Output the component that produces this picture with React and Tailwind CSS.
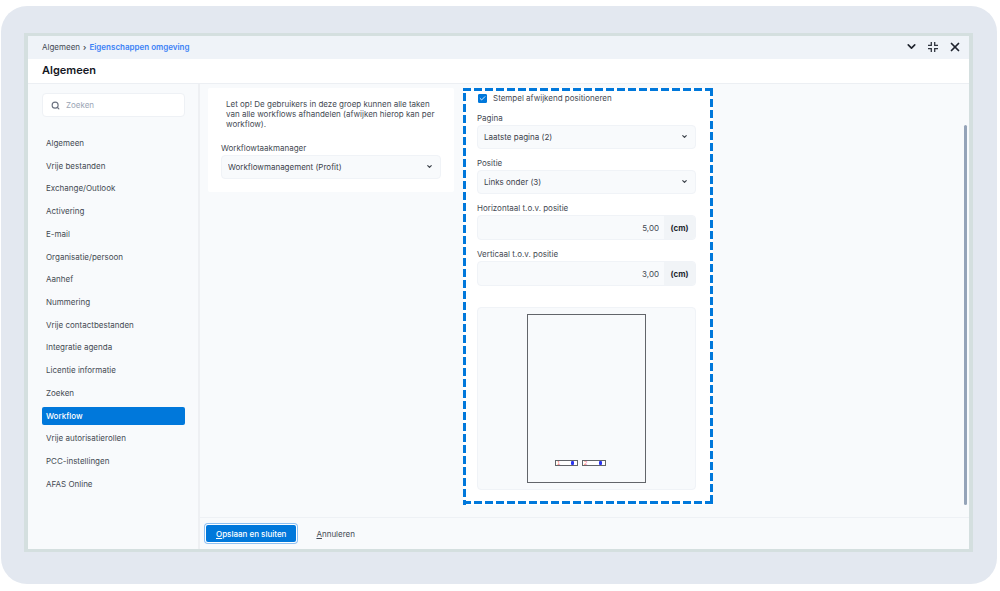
import { useState } from 'react';
import { Check, ChevronDown, Search, X } from 'lucide-react';

const NAV_ITEMS = [
  'Algemeen',
  'Vrije bestanden',
  'Exchange/Outlook',
  'Activering',
  'E-mail',
  'Organisatie/persoon',
  'Aanhef',
  'Nummering',
  'Vrije contactbestanden',
  'Integratie agenda',
  'Licentie informatie',
  'Zoeken',
  'Workflow',
  'Vrije autorisatierollen',
  'PCC-instellingen',
  'AFAS Online',
];

function SelectField({ id, label, options }) {
  return (
    <div className="flex flex-col gap-px">
      <label htmlFor={id} className="leading-3">{label}</label>
      <div className="relative">
        <select
          id={id}
          className="w-full h-6 appearance-none rounded-sm border border-[#f0f3f7] bg-[#f8fafc] pl-[6px] pr-5 text-[#3c424b]"
        >
          {options.map(o => <option key={o}>{o}</option>)}
        </select>
        <ChevronDown size={7} strokeWidth={4} className="absolute right-2 top-2 text-[#3c424b] pointer-events-none" />
      </div>
    </div>
  );
}

function CmField({ id, label, initial }) {
  const [value, setValue] = useState(initial);
  return (
    <div className="flex flex-col gap-px">
      <label htmlFor={id} className="leading-3">{label}</label>
      <div className="flex h-[25px] rounded-sm border border-[#f0f3f7] bg-[#f8fafc] overflow-hidden">
        <input
          id={id} type="text" value={value}
          onChange={e => setValue(e.target.value)}
          className="flex-1 min-w-0 px-[5px] text-right"
        />
        <span className="w-[31px] flex items-center justify-center bg-[#f1f4f7] font-bold text-[#22262e]">(cm)</span>
      </div>
    </div>
  );
}

// Small A4 page with the two stamps drawn on it
function StampPreview() {
  return (
    <svg width="120" height="170" viewBox="0 0 120 170" fontFamily="Liberation Sans, sans-serif" fontSize="6">
      <rect x="0.5" y="0.5" width="118" height="168" fill="none" stroke="#62656a" />
      <rect x="28.5" y="146.5" width="22" height="5" fill="#fff" stroke="#62656a" />
      <text x="30" y="151" fill="#f26b75">1</text>
      <rect x="44" y="147" width="3" height="4" rx="1" fill="#2b35f0" />
      <rect x="55.5" y="146.5" width="23" height="5" fill="#fff" stroke="#62656a" />
      <text x="57" y="151" fill="#f26b75">2</text>
      <rect x="72" y="147" width="3" height="4" rx="1" fill="#2b35f0" />
    </svg>
  );
}

function ShrinkIcon() {
  return (
    <svg width="10" height="10" viewBox="0 0 10 10" fill="none" stroke="#30353f" strokeWidth="1.3">
      <path d="M3.3 0v3.3H0M6.7 0v3.3H10M3.3 10V6.7H0M6.7 10V6.7H10" />
    </svg>
  );
}

function Sidebar() {
  const [active, setActive] = useState('Workflow');
  return (
    <aside className="w-[172px] shrink-0 flex flex-col pl-[14px] pr-[13px] pt-[9px] pb-[56px] border-r-2 border-[#eef0f3]">
      <div className="flex items-center gap-[6px] h-6 rounded-sm border border-[#eef1f5] bg-white px-2">
        <Search size={9} strokeWidth={3} className="shrink-0 text-[#6b7280]" />
        <input type="search" aria-label="Zoeken" placeholder="Zoeken" className="flex-1 min-w-0 placeholder:text-[#9aa5b5]" />
      </div>
      <nav className="flex-1 flex flex-col mt-[17px]">
        <ul className="flex-1 flex flex-col justify-between">
          {NAV_ITEMS.map(item => (
            <li key={item} className="flex">
              <button
                onClick={() => setActive(item)}
                className={item === active
                  ? 'w-full h-[18px] px-1 text-left rounded-xs bg-[#0078db] text-white font-medium'
                  : 'w-full h-[18px] px-1 text-left'}
              >
                {item}
              </button>
            </li>
          ))}
        </ul>
      </nav>
    </aside>
  );
}

export default function App() {
  const [custom, setCustom] = useState(true);

  return (
    <div className="h-screen bg-white pt-[6px] pr-[3px] pb-[7px] pl-px font-['Inter',sans-serif] text-[8px] leading-3 text-[#444a53]">
      <div className="h-full rounded-[26px] bg-[#e3e8f0] pt-[27px] pl-[23px] pr-6 pb-8">
        <div className="h-full flex flex-col border-x-4 border-y-3 border-[#d4dfdf] bg-[#f8fafc]">
          <header>
            <div className="h-[23px] flex items-center pl-[14px] pr-[7px] pb-0.5 bg-[#eff3f8]">
              <nav className="flex-1 flex items-center gap-[3px]">
                <a href="#algemeen">Algemeen</a>
                <span className="font-semibold">›</span>
                <a href="#omgeving" className="font-semibold text-[#3b82f6]">Eigenschappen omgeving</a>
              </nav>
              <div className="flex items-center gap-[10px] text-[#20242e]">
                <button aria-label="Inklappen"><ChevronDown size={13} strokeWidth={3} /></button>
                <button aria-label="Verkleinen"><ShrinkIcon /></button>
                <button aria-label="Sluiten"><X size={14} strokeWidth={3} /></button>
              </div>
            </div>
            <div className="h-[25px] flex items-center pl-[14px] pb-0.5 bg-white border-b border-[#eceff3]">
              <h1 className="text-[11px] font-semibold text-[#14171f]">Algemeen</h1>
            </div>
          </header>

          <div className="flex-1 min-h-0 flex">
            <Sidebar />
            <div className="flex-1 min-w-0 flex flex-col">
              <main className="relative flex-1 min-h-0 flex items-start gap-[9px] pl-2 pt-1">
                <section className="w-[246px] rounded-xs bg-white px-[13px] pt-[11px] pb-[13px]">
                  <p className="px-[5px] leading-[10px]">
                    Let op! De gebruikers in deze groep kunnen alle taken van alle workflows afhandelen (afwijken hierop kan per workflow).
                  </p>
                  <div className="mt-[13px]">
                    <SelectField id="manager" label="Workflowtaakmanager" options={['Workflowmanagement (Profit)']} />
                  </div>
                </section>

                <section className="relative w-[250px] bg-white pl-[14px] pr-[17px] pt-1 pb-[15px]">
                  <svg className="absolute inset-0 w-full h-full pointer-events-none" fill="none" stroke="#0078db" strokeWidth="3" strokeDasharray="8 3">
                    <line x1="0" y1="1.5" x2="100%" y2="1.5" />
                    <line x1="1.5" y1="5" x2="1.5" y2="100%" />
                    <line x1="248.5" y1="0" x2="248.5" y2="100%" />
                    <line x1="0" y1="414.5" x2="100%" y2="414.5" />
                  </svg>
                  <div className="flex flex-col gap-2">
                    <div className="flex items-center gap-[6px] h-3">
                      <span className="relative flex ml-px">
                        <input
                          id="custom" type="checkbox" checked={custom}
                          onChange={e => setCustom(e.target.checked)}
                          className="size-[9px] appearance-none rounded-[1px] border border-[#0078db] checked:bg-[#0078db]"
                        />
                        {custom && <Check size={7} strokeWidth={3} className="absolute left-px top-px text-white pointer-events-none" />}
                      </span>
                      <label htmlFor="custom">Stempel afwijkend positioneren</label>
                    </div>
                    <SelectField id="pagina" label="Pagina" options={['Laatste pagina (2)']} />
                    <SelectField id="positie" label="Positie" options={['Links onder (3)']} />
                    <CmField id="horizontaal" label="Horizontaal t.o.v. positie" initial="5,00" />
                    <CmField id="verticaal" label="Verticaal t.o.v. positie" initial="3,00" />
                  </div>
                  <div className="mt-[21px] h-[183px] flex items-center justify-center rounded-sm border border-[#f0f3f7] bg-[#f8fafc]">
                    <StampPreview />
                  </div>
                </section>

                <div className="absolute right-[2px] top-[41px] bottom-3 w-[3px] rounded-full bg-[#94a3b8]" />
              </main>
              <footer className="h-8 flex items-center gap-5 pl-[6px] border-t border-[#eef1f5]">
                <button className="h-[17px] px-[10px] rounded-xs bg-[#0078db] text-white font-medium ring-1 ring-[#8fc1f2] ring-offset-1">
                  <span className="underline">O</span>pslaan en sluiten
                </button>
                <button><span className="underline">A</span>nnuleren</button>
              </footer>
            </div>
          </div>
        </div>
      </div>
    </div>
  );
}
